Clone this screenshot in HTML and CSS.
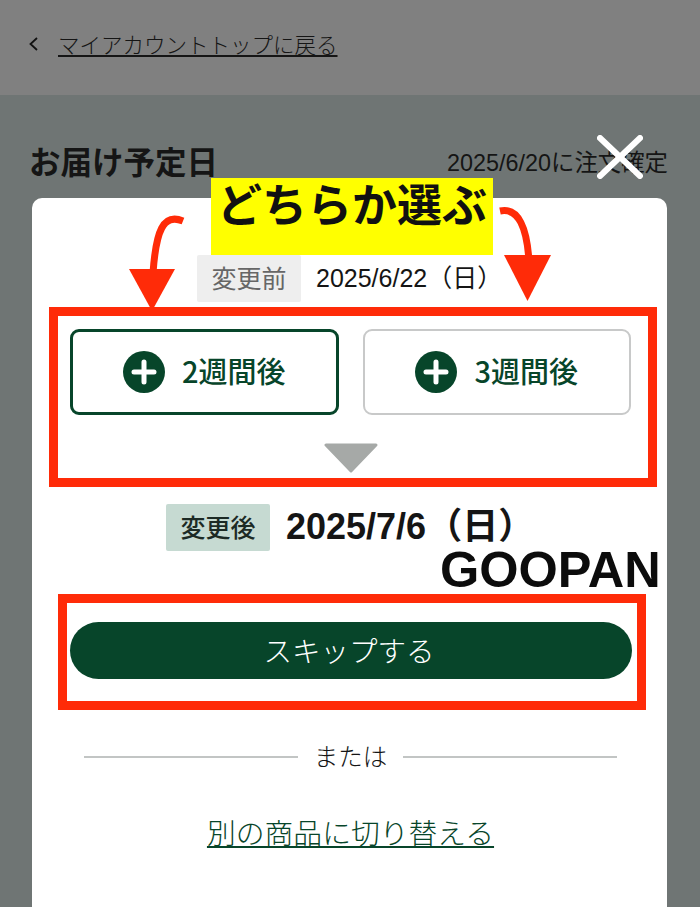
FILE: index.html
```html
<!DOCTYPE html>
<html lang="ja">
<head>
<meta charset="utf-8">
<title>お届け予定日</title>
<link rel="stylesheet" href="styles.css">
</head>
<body>
<header class="topbar">
  <svg class="chevron" viewBox="0 0 10 14" width="10" height="14"><path d="M9 1 2.5 7 9 13" fill="none" stroke="#111" stroke-width="1.8"/></svg>
  <a class="back-link" href="#">マイアカウントトップに戻る</a>
</header>
<main class="page">
  <div class="title-row">
    <h1 class="title">お届け予定日</h1>
    <p class="order-date">2025/6/20に注文確定</p>
  </div>
  <section class="modal">
    <div class="before-row">
      <span class="tag tag-before">変更前</span>
      <span class="before-date">2025/6/22（日）</span>
    </div>
    <div class="choices">
      <button class="choice choice-active">
        <svg class="plus" viewBox="0 0 42 42" width="42" height="42"><circle cx="21" cy="21" r="21" fill="#07452a"/><path d="M21 11v20M11 21h20" stroke="#fff" stroke-width="5" stroke-linecap="round"/></svg>
        <span>2週間後</span>
      </button>
      <button class="choice">
        <svg class="plus" viewBox="0 0 42 42" width="42" height="42"><circle cx="21" cy="21" r="21" fill="#07452a"/><path d="M21 11v20M11 21h20" stroke="#fff" stroke-width="5" stroke-linecap="round"/></svg>
        <span>3週間後</span>
      </button>
    </div>
    <svg class="down" viewBox="0 0 54 30" width="54" height="30"><polygon points="2,2 52,2 27,28" fill="#a6a9a7" stroke="#a6a9a7" stroke-width="3" stroke-linejoin="round"/></svg>
    <div class="after-row">
      <span class="tag tag-after">変更後</span>
      <span class="after-date">2025/7/6（日）</span>
    </div>
    <button class="skip"><span>スキップする</span></button>
    <div class="divider"><span>または</span></div>
    <a class="switch-link" href="#">別の商品に切り替える</a>
  </section>
</main>

<svg class="close-mark" viewBox="0 0 46 44" width="46" height="44"><path d="M3 3 43 41M43 3 3 41" stroke="#fff" stroke-width="6" stroke-linecap="round"/></svg>
<div class="callout">どちらか選ぶ</div>
<svg class="arrow arrow-left" viewBox="0 0 60 100" width="60" height="100"><path d="M58 8C38 0 31 18 28 60" fill="none" stroke="#ff2b08" stroke-width="7"/><polygon points="4,56 50,56 27,98" fill="#ff2b08"/></svg>
<svg class="arrow arrow-right" viewBox="0 0 60 100" width="60" height="100"><path d="M1 4C20 0 28 22 30 54" fill="none" stroke="#ff2b08" stroke-width="7"/><polygon points="5,48 52,48 28.5,94" fill="#ff2b08"/></svg>
<div class="frame frame-choices"></div>
<div class="frame frame-skip"></div>
<div class="brand">GOOPAN</div>
</body>
</html>
```
FILE: styles.css
```css
* { box-sizing: border-box; }
html, body { margin: 0; height: 907px; overflow: hidden; }
body {
  position: relative;
  width: 700px;
  background: #6f7574;
  font-family: "Liberation Sans", "Noto Sans CJK JP", sans-serif;
  color: #151515;
}
.topbar {
  height: 95px;
  background: #808080;
  display: flex;
  align-items: center;
  gap: 20px;
  padding: 0 0 8px 28px;
}
.back-link {
  font-size: 21.5px;
  line-height: 28px;
  color: #151515;
  font-family: "Noto Sans CJK JP", sans-serif;
  font-weight: 300;
  text-decoration: underline;
  text-underline-offset: 2px;
}
.page { padding: 44px 32px 0 32px; }
.title-row {
  display: flex;
  justify-content: space-between;
  align-items: center;
  height: 42px;
  margin-bottom: 17px;
}
.title {
  margin: 0 0 0 -3px;
  font-family: "Noto Sans CJK JP", sans-serif;
  font-size: 31.5px;
  line-height: 42px;
  font-weight: 700;
}
.order-date {
  margin: 6px 0 0;
  font-size: 23.4px;
  line-height: 30px;
}
.modal {
  width: 635px;
  height: 709px;
  background: #fff;
  border-radius: 10px 10px 0 0;
  padding: 57px 36px 0 38px;
  display: flex;
  flex-direction: column;
  align-items: center;
}
.before-row, .after-row { display: flex; align-items: center; width: 100%; flex: none; height: 47px; }
.before-row { gap: 15px; padding-left: 127px; }
.after-row { gap: 16px; padding-left: 96px; margin-top: 31px; }
.tag {
  display: flex;
  align-items: center;
  justify-content: center;
  width: 104px;
  height: 47px;
  padding-bottom: 4px;
  font-family: "Noto Sans CJK JP", sans-serif;
  font-size: 25px;
  border-radius: 2px;
}
.tag-before { background: #eeeeee; color: #666; font-weight: 400; }
.tag-after { background: #c6dad2; color: #1c2a25; font-weight: 500; }
.before-date { font-size: 25px; margin-top: -5px; }
.after-date { font-size: 36px; font-weight: 700; margin-top: -10px; }
.choices {
  display: grid;
  grid-template-columns: 1fr 1fr;
  gap: 24px;
  margin-top: 27px;
  width: 100%;
  flex: none;
}
.choice {
  height: 86px;
  padding: 0;
  display: flex;
  align-items: center;
  justify-content: center;
  gap: 17px;
  background: #fff;
  border: 2px solid #c8c9c9;
  border-radius: 9px;
  color: #07452a;
  font-family: "Noto Sans CJK JP", sans-serif;
  font-size: 29px;
  font-weight: 500;
}
.choice span { margin-top: -4px; }
.choice-active { border: 3px solid #07452a; }
.down { margin-top: 28px; display: block; flex: none; }
.skip {
  width: 562px;
  height: 57px;
  margin-top: 71px;
  padding: 0 3px 2px 0;
  border: 0;
  border-radius: 29px;
  background: #07452a;
  color: #fff;
  font-family: "Noto Sans CJK JP", sans-serif;
  font-size: 28.5px;
  font-weight: 300;
  flex: none;
}
.divider {
  width: 533px;
  margin: 60px 0 0 0;
  display: flex;
  align-items: center;
  gap: 16px;
  height: 36px;
  font-family: "Noto Sans CJK JP", sans-serif;
  font-size: 24.5px;
  font-weight: 300;
  flex: none;
}
.divider span { margin-top: -4px; }
.divider::before, .divider::after {
  content: "";
  flex: 1;
  height: 2px;
  background: #c2c5c4;
}
.switch-link {
  margin-top: 36px;
  color: #07452a;
  font-family: "Noto Sans CJK JP", sans-serif;
  font-size: 28.8px;
  line-height: 42px;
  font-weight: 300;
  text-decoration: underline;
  text-underline-offset: 2px;
}
.close-mark { position: absolute; left: 597px; top: 135px; }
.callout {
  position: absolute;
  left: 211px;
  top: 178px;
  width: 282px;
  height: 77px;
  background: #ffff00;
  color: #111;
  font-family: "Noto Sans CJK JP", sans-serif;
  font-size: 45px;
  line-height: 50px;
  font-weight: 700;
  text-align: center;
}
.arrow { position: absolute; }
.arrow-left { left: 125px; top: 213px; }
.arrow-right { left: 499px; top: 207px; }
.frame { position: absolute; border: 9px solid #ff2b08; }
.frame-choices { left: 49px; top: 307px; width: 608px; height: 180px; }
.frame-skip { left: 58px; top: 594px; width: 588px; height: 116px; }
.brand {
  position: absolute;
  left: 440px;
  top: 542px;
  font-size: 50.5px;
  line-height: 56px;
  font-weight: 700;
  color: #0c0c0c;
}
```
